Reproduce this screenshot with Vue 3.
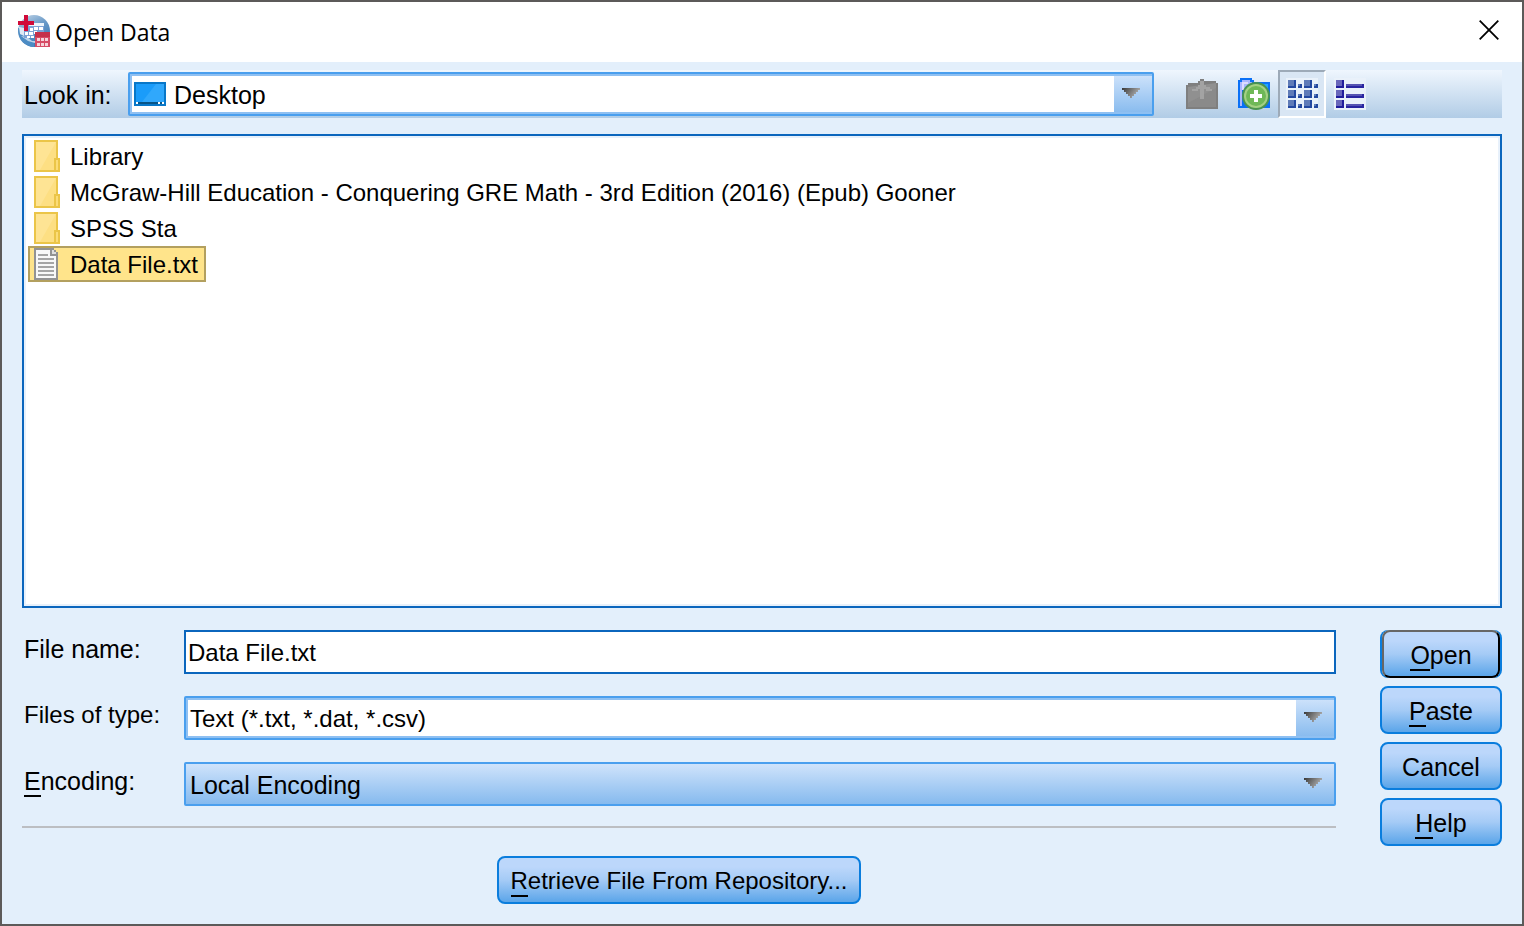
<script setup>
import { ref } from 'vue'

const files = [
  { name: 'Library', kind: 'folder' },
  { name: 'McGraw-Hill Education - Conquering GRE Math - 3rd Edition (2016) (Epub) Gooner', kind: 'folder' },
  { name: 'SPSS Sta', kind: 'folder' },
  { name: 'Data File.txt', kind: 'file' },
]
const actions = [
  { key: 'O', rest: 'pen', primary: true },
  { key: 'P', rest: 'aste' },
  { key: '', rest: 'Cancel' },
  { key: 'H', rest: 'elp' },
]
const selected = ref('Data File.txt')
const fileName = ref('Data File.txt')

function pick(name) {
  selected.value = name
  fileName.value = name
}
</script>

<template>
  <main class="window">
    <header class="titlebar">
      <svg class="app-icon" width="32" height="32" viewBox="0 0 32 32" aria-hidden="true">
        <defs>
          <linearGradient id="globe" x1="0.2" y1="0" x2="0.7" y2="1">
            <stop offset="0" stop-color="#b9cfe4" />
            <stop offset="0.4" stop-color="#6d9cc9" />
            <stop offset="1" stop-color="#3474b2" />
          </linearGradient>
        </defs>
        <circle cx="16" cy="16" r="16" fill="url(#globe)" />
        <path d="M0 13c5 1 7 4 8 9l8 3v7C7 31 0 25 0 13z" fill="#4c8cc4" />
        <path d="M1 12l5 1v8l-4-2z" fill="#dfe9f4" />
        <path d="M3 21l6 1 5 4h3v2l-7-2z" fill="#bcd5eb" />
        <path d="M6 13h4v-3h16v9H16v4H6z" fill="#7da3d6" />
        <path d="M11 8h15v3H11z" fill="#eef4fb" />
        <path d="M12 13h3v3h-3zM16 12h4v3h-4zM21 12h4v3h-4zM7 17h3v3H7zM11 17h4v3h-4zM16 16h3v3h-3zM9 21h3v2H9zM13 21h3v2h-3z" fill="#fff" />
        <path d="M6 0h4v6h6v4h-6v6H6v-6H0V6h6z" fill="#d00a38" />
        <path d="M17 18h15v14H17z" fill="#d64c66" />
        <path d="M17 17h15v5H17z" fill="#c5304a" />
        <path d="M19 23h3v3h-3zM23 23h3v3h-3zM27 23h3v3h-3zM19 28h3v3h-3zM23 28h3v3h-3zM27 28h3v3h-3z" fill="#f5d3da" />
      </svg>
      <h1>Open Data</h1>
      <button class="close" type="button" aria-label="Close">
        <svg width="20" height="20" viewBox="0 0 20 20"><path d="M.7.7l18.6 18.6M19.3.7L.7 19.3" stroke="#000" stroke-width="1.8" /></svg>
      </button>
    </header>

    <form class="content" @submit.prevent>
      <div class="toolbar">
        <label for="look">Look in:</label>
        <div class="combo look">
          <select id="look"><option>Desktop</option></select>
          <svg class="desktop-icon" width="32" height="24" viewBox="0 0 32 24" aria-hidden="true">
            <path d="M0 0h32v24H0z" fill="#0877c8" />
            <path d="M2 2h28v18H2z" fill="#1a9cfa" />
            <path d="M22 2h8v18H8z" fill="#30a8fc" />
            <path d="M2 20h28v2H2z" fill="#085487" />
            <path d="M2 20h2v2H2zM24 20h2v2h-2zM28 20h2v2h-2z" fill="#fff" />
          </svg>
          <span class="arrow"><svg width="18" height="10" viewBox="0 0 18 10"><path d="M0 0h18v2h-2v2h-2v2h-2v2h-2v2H8V8H6V6H4V4H2V2H0z" fill="url(#arrowfill)" /></svg></span>
        </div>
        <div class="tools">
          <button type="button" class="tool up" aria-label="Up one level" disabled>
            <svg width="32" height="30" viewBox="0 0 32 30">
              <path d="M0 6h2V4h10V2h2V0h4v2h12v2h2v26H0z" fill="#7f7f7f" />
              <path d="M2 8l28-4v24H2z" fill="#909090" />
              <path d="M2 24L30 9v19H2z" fill="#8a8a8a" />
              <path d="M6 10h4V8h2V6h2V2h4v4h2v2h4v2h2v2h-6v-2h-2v10h-4V10h-2v2H6z" fill="#a3a3a3" />
            </svg>
          </button>
          <button type="button" class="tool create" aria-label="Create new folder">
            <svg width="32" height="32" viewBox="0 0 32 32">
              <path d="M0 2h2V0h12v2h2v2h16v26H0z" fill="#0a70f6" />
              <path d="M2 4h2V2h8v2h2v4H8v4H4v16H2z" fill="#a9b6ff" />
              <path d="M4 4h6v2H6v6H4z" fill="#dcdcff" />
              <path d="M16 6h14v20z" fill="#23a6fa" />
              <circle cx="18" cy="18" r="14" fill="#4a9350" />
              <circle cx="18" cy="18" r="12" fill="#a4d183" />
              <circle cx="18" cy="18" r="10" fill="#6fb857" />
              <path d="M16 12h4v4h4v4h-4v4h-4v-4h-4v-4h4z" fill="#fff" />
            </svg>
          </button>
          <button type="button" class="tool toggled" aria-label="List" aria-pressed="true">
            <svg width="32" height="32" viewBox="0 0 32 32">
              <path d="M0 0h32v32H0z" fill="#e9f1fa" />
              <g v-for="y in [2, 12, 22]" :key="y">
                <g v-for="x in [2, 18]" :key="x">
                  <path :d="`M${x} ${y}h8v8h-8z`" fill="#2449a0" />
                  <path :d="`M${x} ${y}h6v6h-6z`" fill="#5f7bb8" />
                  <path :d="`M${x + 10} ${y + 4}h4v4h-4z`" fill="#2449a0" />
                  <path :d="`M${x + 10} ${y + 4}h2v2h-2z`" fill="#5f7bb8" />
                </g>
              </g>
            </svg>
          </button>
          <button type="button" class="tool" aria-label="Details" aria-pressed="false">
            <svg width="32" height="32" viewBox="0 0 32 32">
              <path d="M0 0h32v32H0z" fill="#e9f1fa" />
              <g v-for="y in [2, 12, 22]" :key="y">
                <path :d="`M2 ${y}h8v8H2z`" fill="#211d9c" />
                <path :d="`M2 ${y}h6v6H2z`" fill="#6866ba" />
                <path :d="`M12 ${y + 4}h18v4H12z`" fill="#2925a0" />
                <path :d="`M12 ${y + 4}h16v2H12z`" fill="#5553b2" />
              </g>
            </svg>
          </button>
        </div>
      </div>

      <ul class="files">
        <li v-for="f in files" :key="f.name">
          <button type="button" class="file" :class="{ selected: f.name === selected }" @click="pick(f.name)">
            <svg v-if="f.kind === 'folder'" width="26" height="32" viewBox="0 0 26 32" aria-hidden="true">
              <path d="M0 0h24v18h2v14H0z" fill="#ebc548" />
              <path d="M2 2h20v16h-2v12H2z" fill="#fee494" />
              <path d="M22 2v16h-2v12H6z" fill="#fddf83" />
              <path d="M22 20h2v10h-2z" fill="#fbdc78" />
            </svg>
            <svg v-else width="26" height="32" viewBox="0 0 26 32" aria-hidden="true">
              <path d="M0 0h20v2h2v2h2v28H0z" fill="#939393" />
              <path d="M2 2h14v6h6v22H2z" fill="#f8f8f8" />
              <path d="M18 2h2v2h2v2h-4z" fill="#dedede" />
              <path d="M4 6h10v2H4zM4 10h16v2H4zM4 14h16v2H4zM4 18h16v2H4zM4 22h16v2H4zM4 26h16v2H4z" fill="#a5a5a5" />
            </svg>
            <span>{{ f.name }}</span>
          </button>
        </li>
      </ul>

      <div class="bottom">
        <div class="fields">
          <div class="field">
            <label for="name">File name:</label>
            <input id="name" v-model="fileName" type="text" spellcheck="false" />
          </div>
          <div class="field compact">
            <label for="type">Files of type:</label>
            <div class="combo">
              <select id="type"><option>Text (*.txt, *.dat, *.csv)</option></select>
              <span class="arrow"><svg width="18" height="10" viewBox="0 0 18 10"><path d="M0 0h18v2h-2v2h-2v2h-2v2h-2v2H8V8H6V6H4V4H2V2H0z" fill="url(#arrowfill)" /></svg></span>
            </div>
          </div>
          <div class="field">
            <label for="encoding"><span class="key">E</span>ncoding:</label>
            <div class="combo filled">
              <select id="encoding"><option>Local Encoding</option></select>
              <span class="arrow"><svg width="18" height="10" viewBox="0 0 18 10"><path d="M0 0h18v2h-2v2h-2v2h-2v2h-2v2H8V8H6V6H4V4H2V2H0z" fill="url(#arrowfill)" /></svg></span>
            </div>
          </div>
          <div class="repository">
            <button type="button" class="push"><span class="key">R</span>etrieve File From Repository...</button>
          </div>
        </div>
        <div class="actions">
          <button v-for="a in actions" :key="a.rest" type="button" class="push" :class="{ primary: a.primary }"><span v-if="a.key" class="key">{{ a.key }}</span>{{ a.rest }}</button>
        </div>
      </div>
    </form>

    <svg class="defs" width="0" height="0" aria-hidden="true">
      <linearGradient id="arrowfill" x1="0" y1="0" x2="1" y2="0.4">
        <stop offset="0" stop-color="#383838" />
        <stop offset="1" stop-color="#b0b0b0" />
      </linearGradient>
    </svg>
  </main>
</template>

<style>
body {
  margin: 0;
}
</style>

<style scoped>
* {
  box-sizing: border-box;
}
.window {
  display: flex;
  flex-direction: column;
  min-height: 100vh;
  border: 2px solid #5c5a59;
  background: #e3effb;
  color: #000;
  font-family: "Liberation Sans", Arial, sans-serif;
  font-size: 25px;
  line-height: 32px;
}
.defs {
  position: absolute;
}
button,
input,
select {
  font: inherit;
  color: inherit;
  margin: 0;
}
svg {
  display: block;
  flex: none;
}
.titlebar {
  display: flex;
  align-items: center;
  height: 60px;
  padding: 0 23px 0 16px;
  background: #fff;
}
.app-icon {
  margin-bottom: 2px;
}
h1 {
  flex: 1;
  margin: 0 0 0 5px;
  font-family: "Open Sans", "Noto Sans", sans-serif;
  font-size: 23px;
  font-weight: 400;
}
.close {
  padding: 0 0 4px;
  border: 0;
  background: none;
}
.content {
  display: flex;
  flex: 1;
  flex-direction: column;
  padding: 8px 20px 20px;
}
.toolbar {
  display: flex;
  align-items: center;
  height: 48px;
  padding-left: 2px;
  background: linear-gradient(#eff6fe, #b1cce6);
}
.toolbar label {
  width: 104px;
  padding-top: 2px;
}
.combo {
  position: relative;
  flex: 1;
  height: 44px;
  border: 2px solid #4a9fee;
  border-radius: 2px;
  background: linear-gradient(#cfe3fb, #86baee);
}
.combo select {
  display: block;
  width: 100%;
  height: 40px;
  padding: 2px 44px 0 2px;
  border: 2px solid #8fc0f2;
  border-right: 0;
  background: linear-gradient(#fff, #fff) left / calc(100% - 38px) 100% no-repeat;
  appearance: none;
  outline: none;
}
.combo.filled select {
  border-color: transparent;
  background: none;
}
.look {
  flex: 0 1 1026px;
}
.look select {
  padding-left: 42px;
}
.desktop-icon {
  position: absolute;
  top: 8px;
  left: 4px;
  pointer-events: none;
}
.arrow {
  position: absolute;
  top: 14px;
  right: 12px;
  pointer-events: none;
}
.tools {
  display: flex;
  align-items: center;
  margin-left: 24px;
}
.tool {
  display: flex;
  align-items: center;
  justify-content: center;
  width: 48px;
  height: 48px;
  padding: 0;
  border: 2px solid transparent;
  background: none;
}
.tool.up {
  width: 50px;
  padding-right: 2px;
}
.tool.create {
  width: 50px;
  padding-left: 2px;
}
.tool.toggled {
  border-color: #9daab8 #fff #fff #9daab8;
  background: #d9e6f4;
}
.files {
  flex: 1;
  margin: 16px 0 22px;
  padding: 2px 2px 0;
  border: 2px solid #0b66bd;
  background: #fff;
  box-shadow: inset 0 0 0 2px #e8f1fb;
  font-size: 24px;
  list-style: none;
}
.files li {
  display: flex;
  padding-left: 2px;
}
.file {
  display: flex;
  align-items: center;
  gap: 10px;
  height: 36px;
  padding: 0 6px 0 4px;
  border: 2px solid transparent;
  background: none;
  white-space: nowrap;
}
.file span {
  padding-top: 2px;
}
.file.selected {
  border-color: #b3a05f;
  background: #ffe48b;
}
.bottom {
  display: flex;
  gap: 44px;
}
.fields {
  flex: 1;
  display: flex;
  flex-direction: column;
  gap: 22px;
}
.field {
  display: flex;
}
.field.compact,
.field input {
  font-size: 24px;
}
.field label {
  width: 162px;
  padding: 3px 0 0 2px;
  white-space: nowrap;
}
.field input {
  flex: 1;
  min-width: 0;
  height: 44px;
  padding: 2px 2px 0;
  border: 2px solid #0b66bd;
  background: #fff;
  outline: none;
}
.key {
  box-shadow: 0 2px 0 #000;
  display: inline-block;
  line-height: 28px;
}
.repository {
  display: flex;
  justify-content: center;
  margin-top: -2px;
  padding-top: 28px;
  border-top: 2px solid #bcbec2;
  font-size: 24px;
}
.push {
  height: 48px;
  padding: 2px 12px 0;
  border: 2px solid #0a7ddd;
  border-radius: 8px;
  background: linear-gradient(#bcd7fb 20%, #a5cbf6 50%, #5ba5e9);
  white-space: nowrap;
}
.actions {
  display: flex;
  flex-direction: column;
  gap: 8px;
  width: 122px;
}
.primary {
  margin: 0 2px;
  border-color: #666 #000 #000 #666;
  box-shadow: -2px 0 0 #0a7ddd, 2px 0 0 #0a7ddd;
}
</style>
